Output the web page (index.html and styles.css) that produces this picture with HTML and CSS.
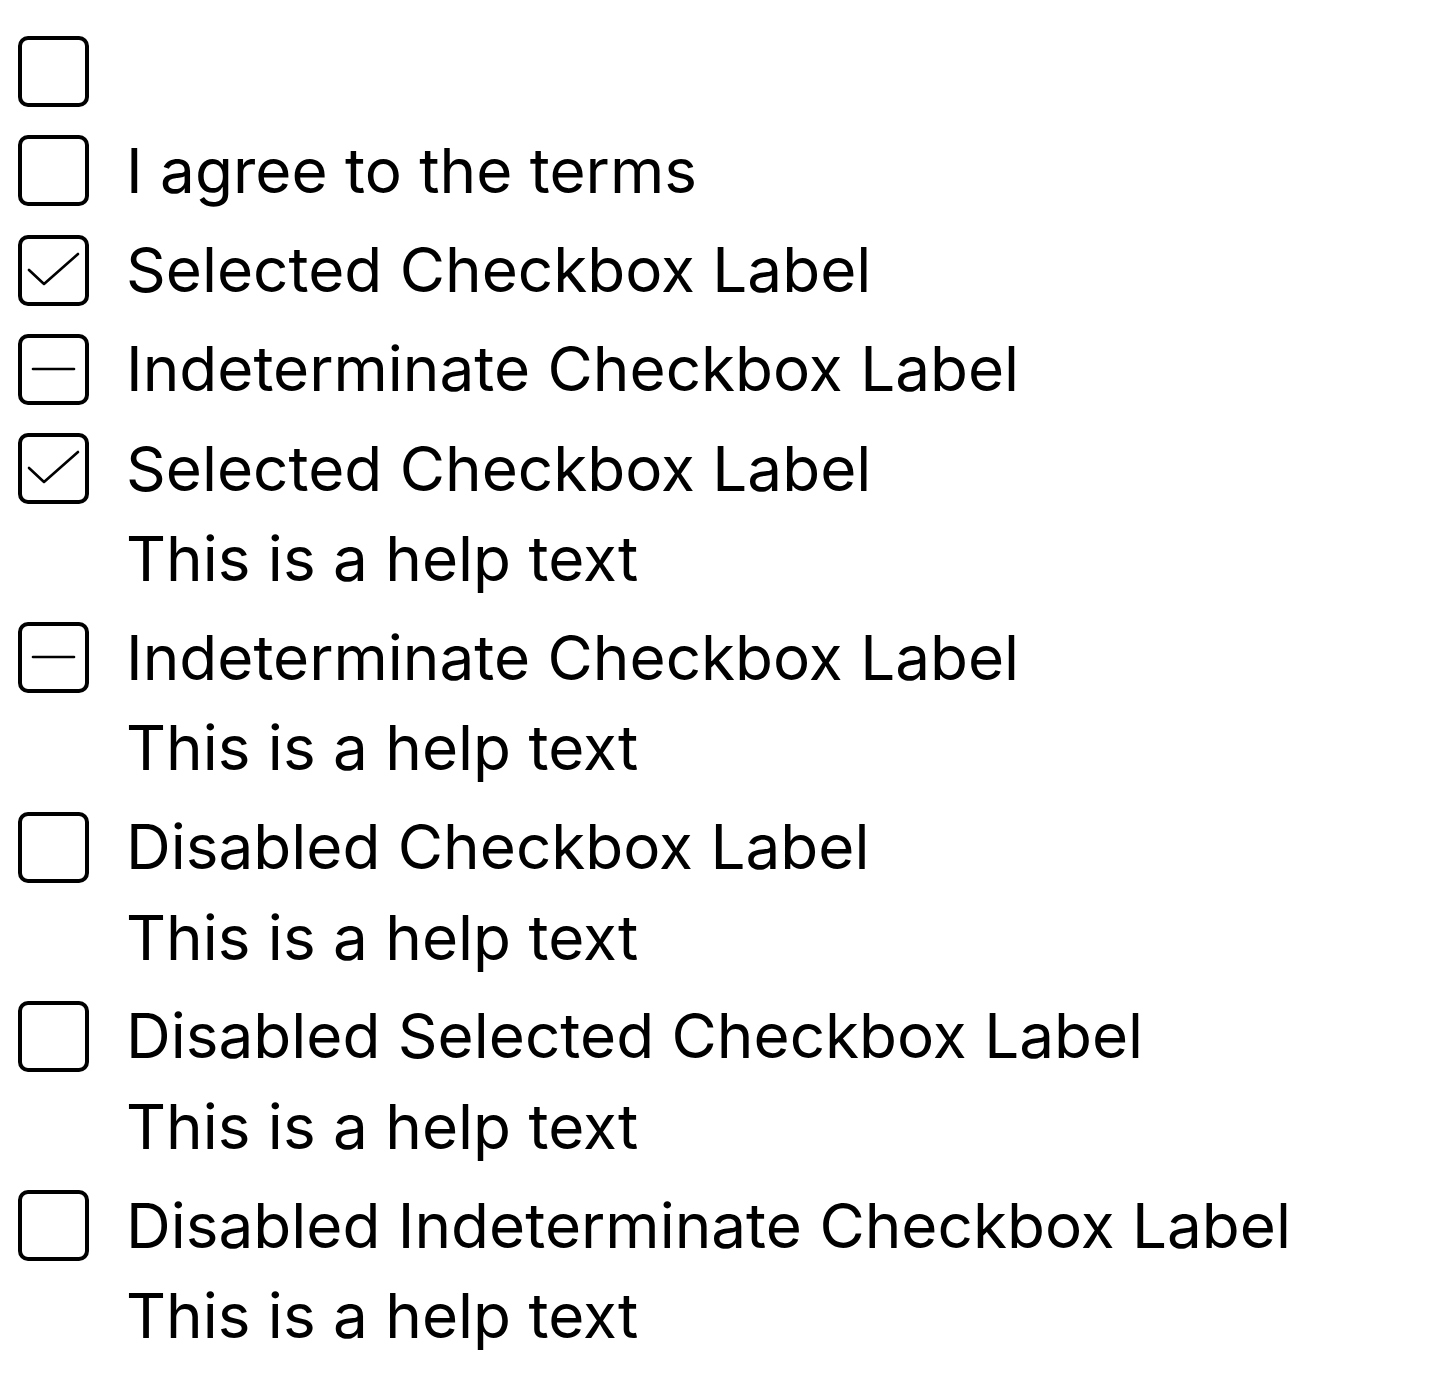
FILE: index.html
```html
<!DOCTYPE html>
<html>
<head>
<meta charset="utf-8">
<link rel="stylesheet" href="styles.css">
</head>
<body>
<div class="list">
  <div class="item">
    <div class="row"><span class="box"></span></div>
  </div>
  <div class="item">
    <div class="row"><span class="box"></span><span class="label">I agree to the terms</span></div>
  </div>
  <div class="item">
    <div class="row"><span class="box"><svg viewBox="0 0 71 71" class="mark"><polyline points="11,35 26,49 60,19"/></svg></span><span class="label">Selected Checkbox Label</span></div>
  </div>
  <div class="item">
    <div class="row"><span class="box"><svg viewBox="0 0 71 71" class="mark"><line x1="15" y1="35" x2="56" y2="35"/></svg></span><span class="label">Indeterminate Checkbox Label</span></div>
  </div>
  <div class="item">
    <div class="row"><span class="box"><svg viewBox="0 0 71 71" class="mark"><polyline points="11,35 26,49 60,19"/></svg></span><span class="label">Selected Checkbox Label</span></div>
    <div class="help">This is a help text</div>
  </div>
  <div class="item">
    <div class="row"><span class="box"><svg viewBox="0 0 71 71" class="mark"><line x1="15" y1="35" x2="56" y2="35"/></svg></span><span class="label">Indeterminate Checkbox Label</span></div>
    <div class="help">This is a help text</div>
  </div>
  <div class="item">
    <div class="row"><span class="box"></span><span class="label">Disabled Checkbox Label</span></div>
    <div class="help">This is a help text</div>
  </div>
  <div class="item">
    <div class="row"><span class="box"></span><span class="label">Disabled Selected Checkbox Label</span></div>
    <div class="help">This is a help text</div>
  </div>
  <div class="item">
    <div class="row"><span class="box"></span><span class="label">Disabled Indeterminate Checkbox Label</span></div>
    <div class="help">This is a help text</div>
  </div>
</div>
</body>
</html>
```
FILE: styles.css
```css
html, body {
  margin: 0;
  padding: 0;
  background: #fff;
}
body {
  font-family: Inter, "Liberation Sans", sans-serif;
  color: #000;
  font-size: 62px;
}
.list {
  display: flex;
  flex-direction: column;
  gap: 28.25px;
  padding: 36px 0 0 18px;
}
.row {
  display: flex;
  align-items: center;
  height: 71px;
  gap: 37px;
}
.box {
  box-sizing: border-box;
  width: 71px;
  height: 71px;
  border: 4px solid #000;
  border-radius: 10px;
  flex: none;
  position: relative;
}
.mark {
  position: absolute;
  left: -4px;
  top: -4px;
  width: 71px;
  height: 71px;
  fill: none;
  stroke: #000;
  stroke-width: 2.6;
  stroke-linecap: round;
  stroke-linejoin: round;
}
.label {
  line-height: 90px;
  white-space: nowrap;
}
.help {
  margin: 10px 0 -10px 108px;
  line-height: 90px;
  white-space: nowrap;
}
```
